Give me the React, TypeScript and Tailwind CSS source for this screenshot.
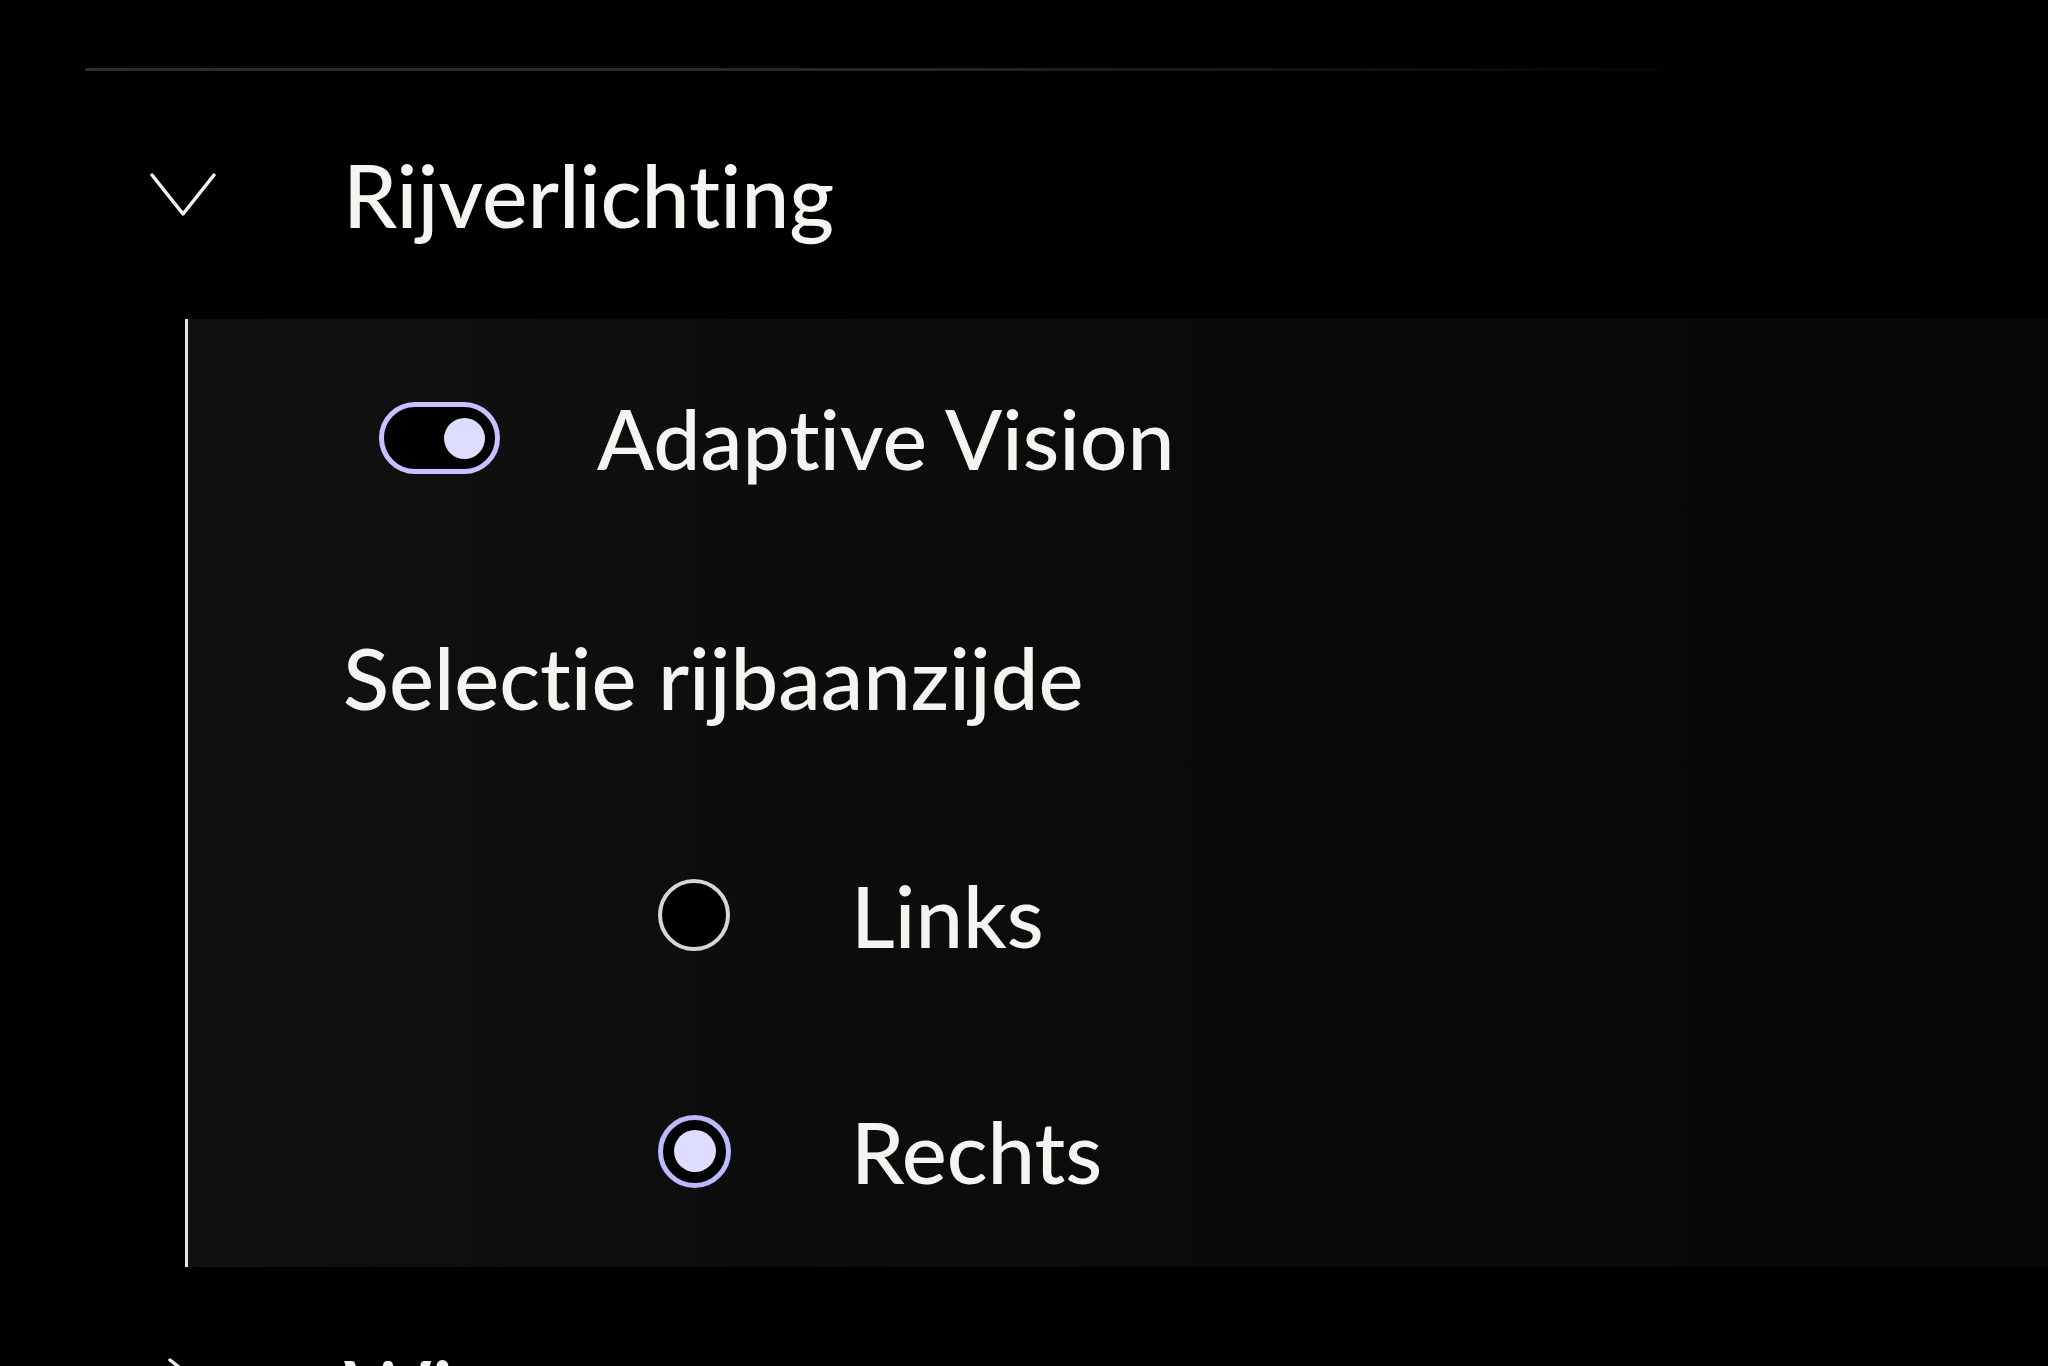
import { useState } from 'react';

const font = { fontFamily: 'Lato, "Noto Sans", sans-serif' };

function ChevronDown() {
  return (
    <svg width="66" height="44" viewBox="0 0 66 44" fill="none">
      <path d="M2 2 L33 41 L64 2" stroke="#f2f2f2" strokeWidth="3.5" strokeLinecap="round" strokeLinejoin="round" />
    </svg>
  );
}

function ChevronRight() {
  return (
    <svg width="44" height="66" viewBox="0 0 44 66" fill="none">
      <path d="M2 2 L41 33 L2 64" stroke="#f2f2f2" strokeWidth="3.5" strokeLinecap="round" strokeLinejoin="round" />
    </svg>
  );
}

function Toggle({ on, onClick }: { on: boolean; onClick: () => void }) {
  return (
    <button
      onClick={onClick}
      className={`w-[121px] h-[72px] rounded-full border-[5px] border-[#c6c2ff] bg-black flex items-center px-[10px] ${on ? 'justify-end' : 'justify-start'}`}
    >
      <span className="block w-[41px] h-[41px] rounded-full bg-[#dddcff]" />
    </button>
  );
}

function Radio({ checked }: { checked: boolean }) {
  if (checked) {
    return (
      <span className="w-[73px] h-[73px] rounded-full border-[5px] border-[#bdb9ff] bg-black flex items-center justify-center">
        <span className="block w-[42px] h-[42px] rounded-full bg-[#dfddff]" />
      </span>
    );
  }
  return <span className="block w-[72px] h-[72px] rounded-full border-[4px] border-[#d6d6d6] bg-black" />;
}

export default function App() {
  const [adaptive, setAdaptive] = useState(true);
  const [side, setSide] = useState<'links' | 'rechts'>('rechts');

  return (
    <div className="w-[2048px] h-[1366px] bg-black overflow-hidden text-[#f4f4f0] font-medium [font-variant-ligatures:none]" style={font}>
      {/* top divider */}
      <div className="pt-[68px] pl-[85px]">
        <div className="w-[1640px] h-[3px] bg-gradient-to-r from-[#2e2e2e] via-[#262626] to-transparent" />
      </div>

      {/* section header */}
      <div className="h-[248px] flex items-center pl-[150px]">
        <div className="w-[193px]">
          <ChevronDown />
        </div>
        <span className="text-[86px] leading-none">Rijverlichting</span>
      </div>

      {/* expanded panel */}
      <div className="ml-[185px] h-[948px] border-l-[3px] border-[#e6e6e6] bg-gradient-to-r from-[#111111] via-[#0b0b0b] to-[#070707] overflow-hidden">
        <div className="h-[238px] flex items-center pl-[191px]">
          <Toggle on={adaptive} onClick={() => setAdaptive(!adaptive)} />
          <span className="ml-[97px] text-[84px] leading-none">Adaptive Vision</span>
        </div>

        <div className="h-[240px] flex items-center pl-[155px]">
          <span className="text-[85px] leading-none">Selectie rijbaanzijde</span>
        </div>

        <button onClick={() => setSide('links')} className="h-[236px] w-full flex items-center pl-[470px]">
          <Radio checked={side === 'links'} />
          <span className="ml-[121px] text-[85px] leading-none">Links</span>
        </button>

        <button onClick={() => setSide('rechts')} className="h-[236px] w-full flex items-center pl-[470px]">
          <Radio checked={side === 'rechts'} />
          <span className="ml-[120px] text-[85px] leading-none">Rechts</span>
        </button>
      </div>

      {/* next collapsed section */}
      <div className="h-[248px] flex items-center pl-[168px]">
        <div className="w-[175px]">
          <ChevronRight />
        </div>
        <span className="text-[86px] leading-none">Wissers</span>
      </div>
    </div>
  );
}
